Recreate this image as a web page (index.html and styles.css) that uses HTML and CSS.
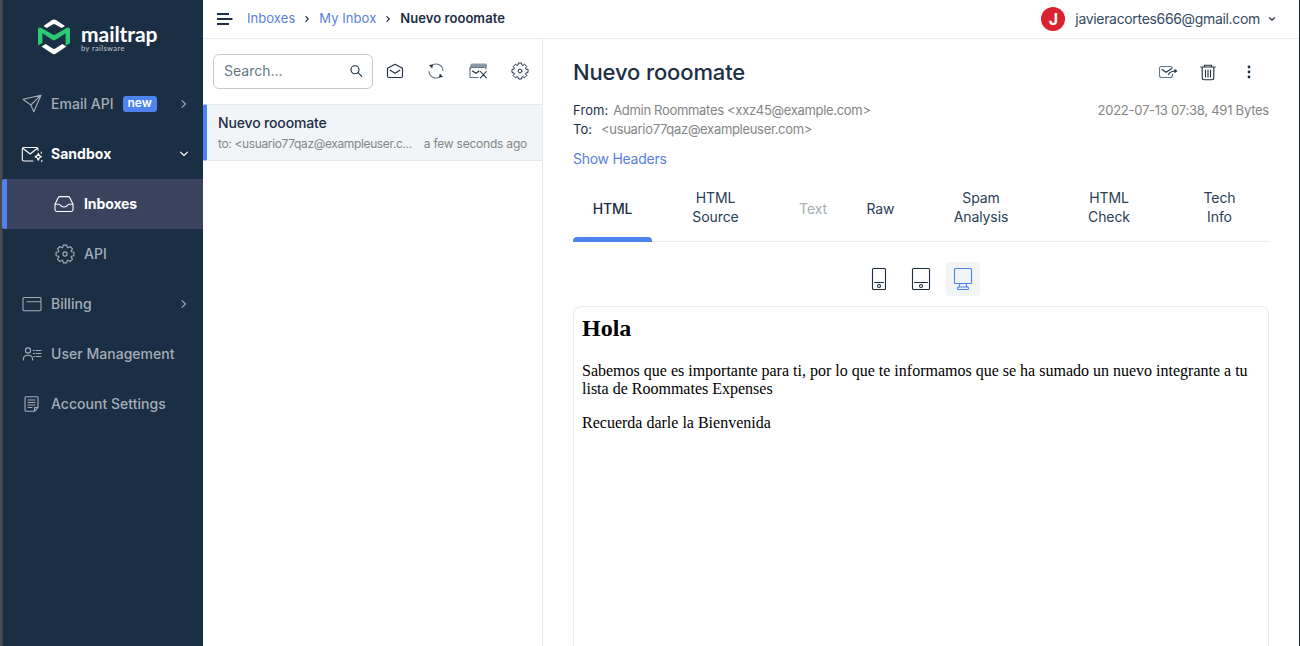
FILE: index.html
```html
<!DOCTYPE html>
<html lang="en">
<head>
<meta charset="utf-8">
<title>Mailtrap - My Inbox</title>
<link rel="stylesheet" href="styles.css">
</head>
<body>
<svg class="defs" width="0" height="0" aria-hidden="true">
  <symbol id="gear" viewBox="-10 -10 20 20">
    <path d="M8.9-1.7V1.7L6.4 2.3 6.1 3 7.5 5.1 5.1 7.5 3 6.1 2.3 6.4 1.7 8.9H-1.7L-2.3 6.4-3 6.1-5.1 7.5-7.5 5.1-6.1 3-6.4 2.3-8.9 1.7V-1.7L-6.4-2.3-6.1-3-7.5-5.1-5.1-7.5-3-6.1-2.3-6.4-1.7-8.9H1.7L2.3-6.4 3-6.1 5.1-7.5 7.5-5.1 6.1-3 6.4-2.3Z"/>
    <circle r="2.1"/>
  </symbol>
</svg>
<div class="app">
  <aside class="sidebar">
    <a class="logo">
      <svg class="logo-mark" width="34" height="36" viewBox="0 0 34 36">
        <path class="mark-white" d="M6.500 7 15 1.100Q17 0 19 1.100L28 7 24.600 9 18.300 5.400Q17 4.700 15.700 5.400L9.700 9Z"/>
        <path class="mark-white" d="M4.500 27.400 8.700 25 15.700 29.500Q17 30.300 18.300 29.500L25.300 25 29.400 27.400 19 34.500Q17 35.800 15 34.500Z"/>
        <path class="mark-green" d="M1 26.500V10.200Q1.400 7.600 4 8.800L17 16.300 30 8.800Q32.600 7.600 33 10.200V24.200L28.600 26.800V14.200L19 20.600Q17 21.900 15 20.600L5.400 14.200V23.900Z"/>
      </svg>
      <span class="logo-words"><span class="logo-name">mailtrap</span><span class="logo-by">by railsware</span></span>
    </a>
    <nav class="nav">
      <a class="nav-item">
        <svg class="icon" width="20" height="20" viewBox="0 0 20 20"><path d="M1 5.3 19 1.2 11.8 17.7 8.8 11ZM8.8 11 19 1.2"/></svg>
        <span class="label">Email API</span><span class="pill">new</span>
        <svg class="icon chev" width="8" height="10" viewBox="0 0 8 10"><path d="M2 1.7 5.4 5 2 8.3"/></svg>
      </a>
      <a class="nav-item open">
        <svg class="icon wide" width="22" height="18" viewBox="0 0 22 18"><path d="M11 16H1.800Q.3 16 .3 14.500V4Q.3 2.500 1.800 2.500H14.500Q16 2.500 16 4V5.500M.8 3.200 8.200 9 15.400 3.200M16.300 8.300Q16.800 11.200 19.500 11.800 16.800 12.400 16.300 15.300 15.800 12.400 13 11.800 15.800 11.200 16.300 8.300ZM19.300 7v1.300M19.800 15.300v1.300"/></svg>
        <span class="label">Sandbox</span>
        <svg class="icon chev" width="10" height="8" viewBox="0 0 10 8"><path d="M1.500 2.200 5 5.500 8.500 2.200"/></svg>
      </a>
      <a class="nav-item sub active">
        <svg class="icon" width="20" height="18" viewBox="0 0 20 18"><path d="M1 9.2 4.2 2.7Q4.7 1.6 6 1.6H14Q15.300 1.600 15.800 2.700L19 9.200V14.600Q19 16.500 17.100 16.500H2.900Q1 16.500 1 14.600ZM1 9.200H5.200C6.300 9.200 6.100 12 10 12S13.700 9.200 14.800 9.200H19"/></svg>
        <span class="label">Inboxes</span>
      </a>
      <a class="nav-item sub">
        <svg class="icon" width="20" height="20"><use href="#gear"/></svg>
        <span class="label">API</span>
      </a>
      <a class="nav-item">
        <svg class="icon" width="20" height="18" viewBox="0 0 20 18"><rect x="1" y="2.500" width="18" height="13.200" rx="1.200"/><path d="M5 6.800H18.500"/></svg>
        <span class="label">Billing</span>
        <svg class="icon chev" width="8" height="10" viewBox="0 0 8 10"><path d="M2 1.700 5.400 5 2 8.300"/></svg>
      </a>
      <a class="nav-item">
        <svg class="icon" width="20" height="18" viewBox="0 0 20 18"><circle cx="6" cy="5.500" r="2.600"/><path d="M1.400 15V14Q1.600 10.300 6 10.300T10.600 14V15M14 5.500H19M14 8.500H19M14 11.500H19M11.300 5.500H12.400M11.300 8.500H12.400M11.800 11.500H12.600"/></svg>
        <span class="label">User Management</span>
      </a>
      <a class="nav-item">
        <svg class="icon" width="20" height="18" viewBox="0 0 20 18"><path d="M4 1.700H15Q16 1.700 16 2.700V12.300L12.500 16.300H4Q3 16.300 3 15.300V2.700Q3 1.700 4 1.700ZM6 5H13M6 7.500H13M6 10H13M6 12.500H10M12.500 16V12.500H16"/></svg>
        <span class="label">Account Settings</span>
      </a>
    </nav>
  </aside>

  <div class="page">
    <header class="topbar">
      <svg class="burger" width="16" height="14" viewBox="0 0 16 14"><path d="M0 2H12M0 7H15.500M0 12H12"/></svg>
      <nav class="crumbs">
        <a>Inboxes</a>
        <svg class="crumb-sep" width="6" height="8" viewBox="0 0 6 8"><path d="M1.500 1.200 4.200 4 1.500 6.800"/></svg>
        <a>My Inbox</a>
        <svg class="crumb-sep" width="6" height="8" viewBox="0 0 6 8"><path d="M1.500 1.200 4.200 4 1.500 6.800"/></svg>
        <b>Nuevo rooomate</b>
      </nav>
      <div class="account">
        <span class="avatar">J</span>
        <span class="email">javieracortes666@gmail.com</span>
        <svg class="crumb-sep" width="8" height="6" viewBox="0 0 8 6"><path d="M1.200 1.500 4 4.200 6.800 1.500"/></svg>
      </div>
    </header>

    <div class="columns">
      <section class="list">
        <div class="tools">
          <div class="search"><span>Search...</span>
            <svg class="icon dark" width="14" height="14" viewBox="0 0 14 14"><circle cx="6" cy="5.700" r="4"/><path d="M9 8.700 12.700 12.300"/></svg>
          </div>
          <svg class="icon dark" width="18" height="18" viewBox="0 0 18 18"><path d="M1.500 6.300 9 2.300 16.500 6.300V14Q16.500 15.500 15 15.500H3Q1.500 15.500 1.500 14ZM4.200 8.200 9 11.300 13.800 8.200"/></svg>
          <svg class="icon dark" width="18" height="18" viewBox="0 0 18 18"><path class="muted" d="M5.500 3A7 7 0 0 1 16 8.500M12.500 15A7 7 0 0 1 2 9.500"/><path class="solid" d="M2 3 6 2.500 5.200 6.500ZM16 15 12 15.500 12.800 11.500Z"/></svg>
          <svg class="icon dark" width="20" height="18" viewBox="0 0 20 18"><path class="shade" d="M4.500 2H17.500Q18.500 2 18.300 3L17.500 5.500H3L1.800 7.200 3 3Q3.300 2 4.500 2Z"/><path class="muted" d="M2 15V6.500Q2.200 5.500 3.500 5.500H15.500M2 15.500H10.500M18 3.500V7"/><path d="M4.500 9 8 11.300 11 9M12.500 9.500 18.300 15.800M18.300 9.500 12.500 15.800"/></svg>
          <svg class="icon dark" width="18" height="18"><use href="#gear"/></svg>
        </div>
        <article class="message">
          <h2>Nuevo rooomate</h2>
          <p><span class="to">to: &lt;usuario77qaz@exampleuser.c...</span><time>a few seconds ago</time></p>
        </article>
      </section>

      <main class="detail">
        <div class="title-row">
          <h1>Nuevo rooomate</h1>
          <div class="actions">
            <svg class="icon dark" width="20" height="16" viewBox="0 0 20 16"><path class="muted" d="M14.500 10V11.500Q14.500 13.500 12.500 13.500H3.500Q1.500 13.500 1.500 11.500V4.500Q1.500 2.500 3.500 2.500H12.500Q14 2.500 14.500 4"/><path d="M4 5.500 8 8.300 13.500 4.800M10.500 10.500Q12.500 7 17.500 7"/><path class="solid" d="M16.500 4.800 19.500 7 16.500 9.200Z"/></svg>
            <svg class="icon dark" width="16" height="17" viewBox="0 0 16 17"><path d="M.800 3H15.200M2.200 3V14Q2.200 15.700 4 15.700H12Q13.800 15.700 13.800 14V3M4.500 3V1.200H11.500V3M5.500 6V13M8 6V13M10.500 6V13"/></svg>
            <svg class="dots" width="4" height="14" viewBox="0 0 4 14"><circle cx="2" cy="2" r="1.400"/><circle cx="2" cy="7" r="1.400"/><circle cx="2" cy="12" r="1.400"/></svg>
          </div>
        </div>
        <div class="meta">
          <div>
            <p>From: <span class="addr from-addr">Admin Roommates &lt;xxz45@example.com&gt;</span></p>
            <p>To: <span class="addr to-addr">&lt;usuario77qaz@exampleuser.com&gt;</span></p>
          </div>
          <time>2022-07-13 07:38, 491 Bytes</time>
        </div>
        <a class="headers">Show Headers</a>
        <div class="tabs">
          <a class="tab current">HTML</a>
          <a class="tab">HTML<br>Source</a>
          <a class="tab single disabled">Text</a>
          <a class="tab single">Raw</a>
          <a class="tab">Spam<br>Analysis</a>
          <a class="tab">HTML<br>Check</a>
          <a class="tab">Tech<br>Info</a>
        </div>
        <div class="devices">
          <span class="device"><svg class="icon dark" width="16" height="24" viewBox="0 0 16 24"><rect x="1.500" y="1.500" width="13" height="21" rx="1"/><path d="M3.500 15.500H12.500"/><circle cx="8" cy="19" r="1.500"/></svg></span>
          <span class="device"><svg class="icon dark" width="20" height="24" viewBox="0 0 20 24"><rect x="1.500" y="1.500" width="17" height="21" rx="1"/><path d="M3.500 15.500H16.500"/><circle cx="10" cy="19" r="1.500"/></svg></span>
          <span class="device chosen"><svg class="icon blue" width="20" height="24" viewBox="0 0 20 24"><rect x="1.500" y="1.500" width="17" height="15" rx="1"/><path d="M7 16.500 6.200 20M13 16.500 13.800 20"/><rect x="4.500" y="20" width="11" height="2.500" rx="1"/></svg></span>
        </div>
        <div class="preview">
          <h3>Hola</h3>
          <p>Sabemos que es importante para ti, por lo que te informamos que se ha sumado un nuevo integrante a tu lista de Roommates Expenses</p>
          <p>Recuerda darle la Bienvenida</p>
        </div>
      </main>
    </div>
  </div>
</div>
</body>
</html>
```
FILE: styles.css
```css
* { box-sizing: border-box; }
body { margin: 0; font-family: Inter, "Liberation Sans", sans-serif; color: #1c2e44; }
h1, h2, h3, p { margin: 0; }
.defs { display: block; }
.app { display: flex; height: 646px; overflow: hidden; background: #fff; border-right: 1px solid #22262b; }
.icon { flex: none; fill: none; stroke: currentColor; stroke-width: 1.1; stroke-linejoin: round; stroke-linecap: round; overflow: visible; }
.dark { color: #1c2e44; }
.blue { color: #4c83ee; }
.solid { fill: currentColor; stroke: none; }
.shade { fill: #8e99a8; stroke: #8e99a8; }
.muted { stroke: #667386; }

.sidebar { flex: none; width: 203px; background: #1b2f44; border-left: 2px solid #4a4a4a; box-shadow: inset 1px 0 #33404e; }
.logo { display: flex; height: 79px; padding: 19px 0 0 35px; gap: 10px; }
.mark-white { fill: #fff; }
.mark-green { fill: #2ccb72; }
.logo-words { display: flex; flex-direction: column; color: #fff; }
.logo-name { font: 700 21px/25px Lato, sans-serif; padding-top: 2px; height: 25px; letter-spacing: -.05px; }
.logo-by { font: 400 7.5px/9px Lato, sans-serif; color: #c0c8d0; letter-spacing: .4px; }
.nav-item { display: flex; align-items: center; height: 50px; padding: 0 15px 0 20px; color: #a4adb7; font-size: 14px; font-weight: 500; letter-spacing: .03px; }
.nav-item .label { margin-left: 9px; padding-bottom: 2px; }
.nav-item .wide { margin-right: -2px; }
.nav-item .chev { margin-left: auto; }
.nav-item.open { color: #fff; font-weight: 700; padding-right: 14px; }
.nav-item.active { color: #fff; font-weight: 700; letter-spacing: -.1px; background: #39435e; border-left: 5px solid #4c83ee; border-radius: 3px 0 0 3px; }
.nav-item.sub { padding-left: 53px; }
.nav-item.sub.active { padding-left: 47px; }
.active .label { padding-left: 1px; }
.pill { margin: 0 0 1px 9px; height: 16px; padding: 0 5px; border-radius: 3px; background: #4c83ee; color: #fff; font-size: 12px; line-height: 14px; font-weight: 600; letter-spacing: -.1px; }

.page { flex: 1; min-width: 0; display: flex; flex-direction: column; }
.topbar { display: flex; align-items: center; flex: none; height: 39px; padding: 0 23px 1px 14px; border-bottom: 1px solid #e8eaed; }
.burger { stroke: #1c2e44; stroke-width: 2; }
.crumbs { display: flex; align-items: center; margin-left: 14px; padding-bottom: 2px; font-size: 13px; letter-spacing: .06px; color: #5a7fdc; }
.crumbs b { color: #1c2e44; font-weight: 600; }
.crumb-sep { fill: none; stroke: #1c2e44; stroke-width: 1.1; margin: 2px 9px 0; }
.account { display: flex; align-items: center; margin-left: auto; font-size: 14px; letter-spacing: -.33px; color: #344b5f; }
.account .crumb-sep { margin: 0 0 0 8px; }
.avatar { width: 24px; height: 24px; margin-right: 10px; border-radius: 50%; background: #d9232e; color: #fff; text-align: center; font-size: 16px; line-height: 24px; font-weight: 700; }

.columns { display: flex; flex: 1; min-height: 0; }
.list { flex: none; width: 340px; border-right: 1px solid #e8eaed; }
.tools { display: flex; align-items: center; height: 65px; padding: 0 13px 0 10px; justify-content: space-between; }
.tools > .icon { margin-bottom: 2px; }
.search { display: flex; align-items: center; justify-content: space-between; width: 160px; height: 35px; margin-right: -10px; padding: 0 9px 2px 10px; border: 1px solid #c8cacc; border-radius: 6px; font-size: 14px; color: #667783; }
.message { height: 57px; padding: 10px 15px 0 11px; border: solid #e5e9eb; border-width: 1px 0; border-left: 4px solid #4c83ee; background: #f1f5f7; border-radius: 2px 0 0 2px; }
.message h2 { font-size: 14px; line-height: 15px; font-weight: 500; letter-spacing: -.15px; }
.message p { display: flex; justify-content: space-between; margin-top: 6px; font-size: 12px; line-height: 16px; color: #858585; white-space: nowrap; }
.message .to { letter-spacing: -.36px; }
.message time { letter-spacing: -.22px; }

.detail { flex: 1; min-width: 0; padding: 17px 30px 0; display: flex; flex-direction: column; }
.title-row { display: flex; justify-content: space-between; align-items: center; height: 32px; }
.title-row h1 { font-size: 22px; line-height: 32px; font-weight: 500; letter-spacing: -.13px; }
.actions { display: flex; align-items: center; gap: 22px; padding-right: 18px; }
.dots { margin-left: 9px; fill: #1c2e44; }
.meta { display: flex; justify-content: space-between; margin-top: 13px; font-size: 13px; line-height: 19px; }
.meta .addr, .meta time { color: #858585; letter-spacing: -.31px; }
.meta time { letter-spacing: -.24px; }
.meta p { letter-spacing: .1px; }
.from-addr { margin-left: 1px; }
.to-addr { margin-left: 5px; }
.headers { margin-top: 10px; font-size: 14px; line-height: 19px; letter-spacing: -.27px; color: #5a7fdc; }
.tabs { display: grid; grid-template-columns: 79px 127px 68px 67px 134px 122px 99px; height: 73px; margin: 1px 0 20px; border-bottom: 1px solid #e8eaed; }
.tab { display: flex; align-items: center; justify-content: center; text-align: center; height: 73px; padding-top: 2px; font-size: 14px; line-height: 19px; letter-spacing: -.1px; color: #2b4055; }
.single { padding-top: 5px; }
.current { position: relative; padding-top: 5px; font-weight: 500; letter-spacing: -.25px; color: #1c2e44; }
.current::after { content: ""; position: absolute; left: 0; right: 0; bottom: 0; height: 5px; border-radius: 4px 4px 0 0; background: #4c83ee; }
.disabled { color: #a6adb4; }
.devices { display: flex; justify-content: center; gap: 8px; height: 34px; }
.device { display: grid; place-items: center; width: 34px; height: 34px; border-radius: 4px; }
.chosen { background: #f1f5f7; }
.preview { flex: 1; margin-top: 10px; padding: 7px 8px; border: 1px solid #e8eaed; border-bottom: 0; border-radius: 8px 8px 0 0; font: 16px/18px "Liberation Serif", serif; color: #000; }
.preview h3 { font-size: 24px; line-height: 28px; margin-bottom: 20px; }
.preview p { margin-bottom: 16px; }
```
